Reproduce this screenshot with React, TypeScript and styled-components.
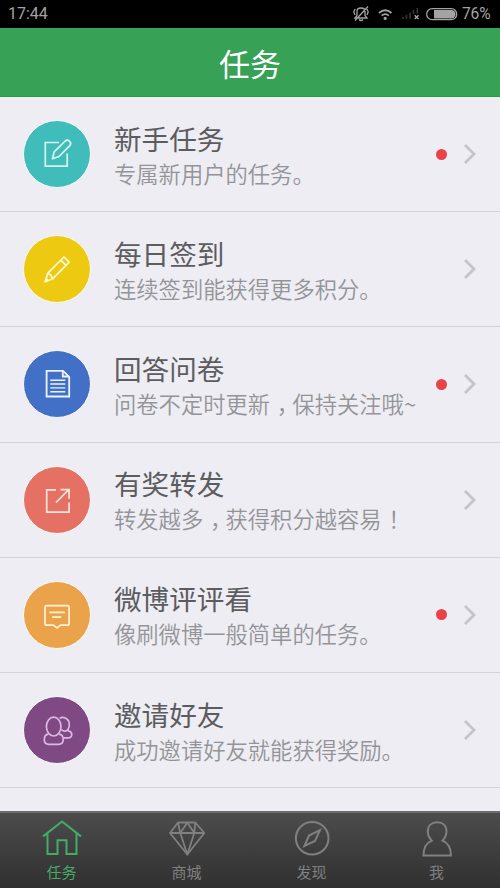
import React from 'react';
import styled, { createGlobalStyle } from 'styled-components';

const GlobalStyle = createGlobalStyle`
  * { box-sizing: border-box; }
  body {
    margin: 0;
    background: #ededf3;
    font-family: "Noto Sans CJK SC", "Noto Sans", sans-serif;
  }
`;

const Screen = styled.div`
  display: flex;
  flex-direction: column;
  width: 500px;
  height: 888px;
  overflow: hidden;
  background: #ededf3;
`;

const StatusBar = styled.div`
  display: flex;
  flex: none;
  align-items: center;
  justify-content: space-between;
  height: 28px;
  padding: 0 8px;
  background: #000;
  color: #a3a3a3;
  font: 16px/28px Roboto, sans-serif;
`;

const StatusIcons = styled.div`
  display: flex;
  align-items: center;
`;

const Percent = styled.span`
  width: 30px;
  margin-left: 4px;
  font-size: 15.6px;
  letter-spacing: -0.2px;
`;

const Header = styled.header`
  flex: none;
  height: 69px;
  background: #37a155;
  color: #fff;
  font-size: 31px;
  line-height: 70px;
  text-align: center;
  border-bottom: 1px solid #329650;
`;

const List = styled.main`
  flex: 1;
  min-height: 0;
  overflow: hidden;
`;

const Row = styled.div`
  display: flex;
  align-items: center;
  height: 115.2px;
  padding: 0 23px;
  border-bottom: 1px solid #d2d2d8;
`;

const Disc = styled.div<{ $color: string }>`
  display: flex;
  flex: none;
  width: 68px;
  height: 68px;
  border: 1px solid #fafaf6;
  border-radius: 50%;
  background: ${(p) => p.$color};
`;

const Copy = styled.div`
  flex: 1;
  margin-left: 23px;
  padding-top: 1px;
  white-space: nowrap;
`;

const Name = styled.div`
  color: #5c5c5f;
  font-size: 27.6px;
  line-height: 36px;
`;

const Detail = styled.div`
  color: #949498;
  font-size: 22.3px;
  font-weight: 350;
  line-height: 34px;
`;

const Centered = styled.span`
  padding: 0 0.2em 0 0.3em;
  font-feature-settings: "halt" 1;
`;

const Dot = styled.span`
  flex: none;
  width: 11px;
  height: 11px;
  margin-right: 16px;
  border-radius: 50%;
  background: #eb4149;
`;

const Chevron = styled.svg`
  flex: none;
  width: 14px;
  height: 22px;
`;

const TabBar = styled.nav`
  display: grid;
  flex: none;
  grid-template-columns: repeat(4, 125px);
  height: 76.6px;
  border-top: 2px solid #6d6d6d;
  background: linear-gradient(#4c4c4c, #303030);
`;

const Tab = styled.div<{ $active?: boolean }>`
  display: flex;
  flex-direction: column;
  align-items: center;
  padding: 4px 2px 0 0;
  color: ${(p) => (p.$active ? '#43ac68' : '#808080')};
  font-size: 15px;
  line-height: 24px;
`;

const TabIcon = styled.svg`
  width: 44px;
  height: 42px;
  fill: none;
  stroke: currentColor;
  stroke-width: 2;
`;

const TabLabel = styled.span`
  margin-top: 1px;
`;

const Glyph = ({ children, tint = '#f6faf8' }: { children: React.ReactNode; tint?: string }) => (
  <svg width="66" height="66" viewBox="-33 -33 66 66" fill="none" stroke={tint} strokeWidth="1.7">
    {children}
  </svg>
);

const tasks = [
  {
    name: '新手任务', detail: <>专属新用户的任务。</>, color: '#40bcbb', dot: true,
    icon: (
      <Glyph tint="#d9f5f2">
        <path d="M2-11.5H-11.7V12.2H10.2V-.5" />
        <path d="M-4.5 4.8L-2.8-2.2L8.2-13Q10.3-14.7 12.6-12.6Q14.7-10.4 12.8-8.3L2 2.5Z" strokeLinejoin="round" />
      </Glyph>
    ),
  },
  {
    name: '每日签到', detail: <>连续签到能获得更多积分。</>, color: '#edca11', dot: false,
    icon: (
      <Glyph tint="#fff9d2">
        <path d="M-11.8 12.7L-9.2 4.2L7-12L12.2-6.8L-4.2 9.7Z" strokeLinejoin="round" />
        <path d="M3.8-8.8L9-3.6M-9.2 4.2L-6.2 6.2L-4.2 9.7" />
        <path d="M-11.8 12.7L-9.5 10" strokeWidth="2.5" />
      </Glyph>
    ),
  },
  {
    name: '回答问卷', detail: <>问卷不定时更新<Centered>，</Centered>保持关注哦~</>, color: '#4370c7', dot: true,
    icon: (
      <Glyph tint="#ecf5ff">
        <path d="M-10.4-13.2H6L12.2-7.2V12.5H-10.4Z" strokeWidth="1.8" />
        <path d="M5.8-13V-7.5H12" strokeWidth="1.8" />
        <path d="M-6.7-3.8H8.3M-6.7 0H8.3M-6.7 3.9H8.3M-6.7 7.8H8.3" strokeWidth="1.4" />
      </Glyph>
    ),
  },
  {
    name: '有奖转发', detail: <>转发越多<Centered>，</Centered>获得积分越容易<Centered>！</Centered></>, color: '#e57165', dot: false,
    icon: (
      <Glyph tint="#ffe5dc">
        <path d="M-1-10.2H-10.3V12.2H12.1V2.5" />
        <path d="M-1 2.5L11.8-10.3M3.5-10.3H12.1V-1.2" />
      </Glyph>
    ),
  },
  {
    name: '微博评评看', detail: <>像刷微博一般简单的任务。</>, color: '#eba34b', dot: true,
    icon: (
      <Glyph tint="#fff1d7">
        <path d="M-10.2-9.3H10.3Q12.1-9.3 12.1-7.5V8.4Q12.1 10.2 10.3 10.2H3.6L0 13L-3.6 10.2H-10.2Q-12 10.2-12 8.4V-7.5Q-12-9.3-10.2-9.3Z" />
        <path d="M-7.6-2.7H7.8M-4.8 2.1H4.3" />
      </Glyph>
    ),
  },
  {
    name: '邀请好友', detail: <>成功邀请好友就能获得奖励。</>, color: '#7f4a84', dot: false,
    icon: (
      <Glyph tint="#dfb7e5">
        <ellipse cx="-3.3" cy="-3.4" rx="7.3" ry="9.4" />
        <path d="M-8.5 4.2C-11.5 4.5-12.7 7-12.7 9.7C-12.7 13-10.5 14.3-8 14.3H1.5C4.5 14.3 6.2 12.7 6.2 9.7C6.2 6.5 4.6 4.5 1.9 4.2" />
        <path d="M2.6-11.6C6-14 12.3-11.8 12.3-5.7C12.3-2 10.6 0.8 8 1.1C6.5 1.2 5.3 0.6 4.4-0.4M10.8 0.8C15.8 1.2 16 7.6 11.7 7.8H7" />
      </Glyph>
    ),
  },
];

const tabs = [
  {
    label: '任务', active: true,
    icon: <path d="M3 19.4L22 4.5L41 19.4M7.5 16V37H17.5V23.2H26.5V37H36.5V16" />,
  },
  {
    label: '商城',
    icon: (
      <g strokeWidth="1.8" strokeLinejoin="round">
        <path d="M13 5.5H30.3L39.3 16L22.3 37.5L5 16Z" />
        <path d="M5 16H39.3M13 5.5L15.3 16L22.3 37.5L29.3 16L30.3 5.5M15.3 16L22.3 5.5L29.3 16" />
      </g>
    ),
  },
  {
    label: '发现',
    icon: (
      <>
        <circle cx="22.2" cy="21.2" r="16.3" />
        <path d="M30 13.2L25 24L14.4 29L19 18.5Z" />
      </>
    ),
  },
  {
    label: '我',
    icon: <path d="M16.8 23.6C14 20.7 12.8 18.4 12.8 14.5C12.8 8.6 16.6 5.3 22.2 5.3C27.8 5.3 31.5 8.6 31.5 14.5C31.5 18.4 30.3 20.7 27.5 23.6C33.2 26 35.9 30.5 35.9 38.5H8.5C8.5 30.5 11 26 16.8 23.6Z" />,
  },
];

export default function App() {
  return (
    <>
      <GlobalStyle />
      <Screen>
        <StatusBar>
          <span>17:44</span>
          <StatusIcons>
            <svg width="112" height="28" viewBox="346 0 112 28" fill="none" stroke="#a3a3a3">
              <path d="M355 18H367L365 15.5V11Q365 8 361 8Q357 8 357 11V15.5ZM359 19.5Q361 21.5 363 19.5M355 20.5L368 6.5M355 9L353.8 12L355 15M367 9L368.2 12L367 15" strokeWidth="1.3" />
              <path d="M379 13Q385.2 7.6 391.5 13M381.6 15.6Q385.2 12.7 388.8 15.6" strokeWidth="1.8" />
              <circle cx="385.2" cy="18.4" r="1.6" fill="#a3a3a3" stroke="none" />
              <path d="M403 17V19M406.5 15V19M410 12.5V19M413.5 10V14M417.3 8V13.5" stroke="#363636" strokeWidth="1.6" />
              <path d="M414.7 15.2L418.5 19M418.5 15.2L414.7 19" strokeWidth="1.4" />
              <rect x="426.7" y="8.7" width="30" height="11" rx="5.5" strokeWidth="1.3" />
              <path d="M434 10H451.3A4.2 4.2 0 0 1 451.3 18.4H434Z" fill="#a3a3a3" stroke="none" />
            </svg>
            <Percent>76%</Percent>
          </StatusIcons>
        </StatusBar>
        <Header>任务</Header>
        <List>
          {tasks.map((t) => (
            <Row key={t.name}>
              <Disc $color={t.color}>{t.icon}</Disc>
              <Copy>
                <Name>{t.name}</Name>
                <Detail>{t.detail}</Detail>
              </Copy>
              {t.dot && <Dot />}
              <Chevron viewBox="0 0 14 22" fill="none" stroke="#c5c5c9" strokeWidth="2.8">
                <path d="M2 2L11 11L2 20" />
              </Chevron>
            </Row>
          ))}
        </List>
        <TabBar>
          {tabs.map((t) => (
            <Tab key={t.label} $active={t.active}>
              <TabIcon viewBox="0 0 44 42">{t.icon}</TabIcon>
              <TabLabel>{t.label}</TabLabel>
            </Tab>
          ))}
        </TabBar>
      </Screen>
    </>
  );
}
